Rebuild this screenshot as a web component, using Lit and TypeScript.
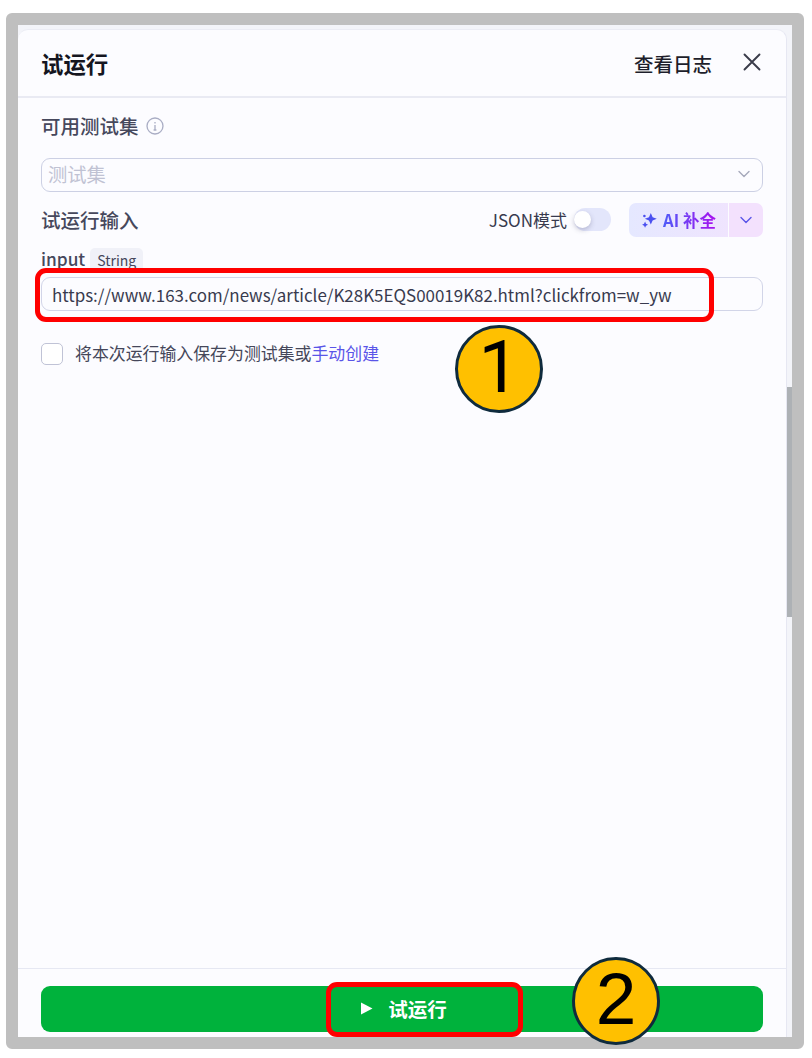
import { LitElement, html, css } from "lit";
import { customElement } from "lit/decorators.js";

@customElement("app-root")
export class AppRoot extends LitElement {
  static styles = css`
    :host {
      display: block;
      width: 812px;
      height: 1058px;
      position: relative;
      background: #fff;
      overflow: hidden;
      font-family: "Noto Sans CJK SC", "Noto Sans", sans-serif;
      color: #383a4e;
    }
    .frame {
      box-sizing: border-box;
      margin: 13px 8px 0 6px;
      height: 1036px;
      border: 12px solid #bfbfbf;
      border-radius: 6px;
      background: #f3f4f9;
      display: flex;
    }
    .panel {
      flex: 1;
      margin-top: 4px;
      background: #fcfcff;
      border-top-left-radius: 10px;
      border-top-right-radius: 10px;
      border-top: 1px solid #ebecf4;
      border-right: 1px solid #e6e7f2;
      display: flex;
      flex-direction: column;
      min-width: 0;
    }
    .track {
      width: 5px;
      padding-top: 362px;
      box-sizing: border-box;
    }
    .thumb {
      height: 230px;
      background: #adb1b5;
    }
    .header {
      height: 68px;
      flex: none;
      box-sizing: border-box;
      border-bottom: 2px solid #e9eaf3;
      display: flex;
      align-items: center;
      padding: 0 25px 0 23px;
    }
    .title {
      font-size: 22.4px;
      font-weight: 700;
      color: #15161f;
      flex: 1;
    }
    .log {
      font-size: 19.5px;
      font-weight: 500;
      color: #1d1e2b;
      margin-right: 31px;
    }
    .close {
      display: block;
      width: 18px;
      height: 18px;
      margin-top: -3px;
    }
    .body {
      flex: 1;
      padding: 0 23px;
      display: flex;
      flex-direction: column;
    }
    .label {
      font-size: 19.5px;
      line-height: 24px;
      font-weight: 500;
      color: #46485c;
    }
    .label-row {
      display: flex;
      align-items: center;
      gap: 7px;
      margin-top: 16px;
      height: 24px;
    }
    .info {
      width: 18px;
      height: 18px;
      display: block;
    }
    .select {
      margin-top: 20px;
      height: 34px;
      box-sizing: border-box;
      border: 1.5px solid #ccd0e4;
      border-radius: 9px;
      display: flex;
      align-items: center;
      padding: 0 11px 2px 6px;
      justify-content: space-between;
      font-size: 19.3px;
      color: #c0c2d3;
    }
    .chev {
      width: 14px;
      height: 14px;
      display: block;
    }
    .input-row {
      margin-top: 10px;
      height: 35px;
      display: flex;
      align-items: center;
    }
    .grow {
      flex: 1;
    }
    .json {
      font-size: 17px;
      font-weight: 400;
      color: #383a4e;
      margin-right: 7px;
    }
    .toggle {
      width: 37px;
      height: 23px;
      border-radius: 12px;
      background: #e3e6fb;
      display: flex;
      align-items: center;
      margin-right: 18px;
    }
    .knob {
      width: 17px;
      height: 17px;
      border-radius: 50%;
      background: #fff;
      box-shadow: 0 2px 5px rgba(70, 70, 110, 0.3);
    }
    .ai {
      display: flex;
      height: 34px;
      border-radius: 7px;
      overflow: hidden;
    }
    .ai-main {
      width: 99px;
      background: linear-gradient(90deg, #e5e8ff, #efe4fe);
      display: flex;
      align-items: center;
      justify-content: center;
      gap: 6px;
      font-size: 16.5px;
      font-weight: 700;
      border-right: 1px solid #fcfcff;
    }
    .ai-text {
      background: linear-gradient(90deg, #4f5cf8, #a811ee);
      -webkit-background-clip: text;
      background-clip: text;
      color: transparent;
    }
    .ai-more {
      width: 34px;
      background: #f3e1fd;
      display: flex;
      align-items: center;
      justify-content: center;
    }
    .var-row {
      margin-top: 11px;
      height: 24px;
      display: flex;
      align-items: center;
      gap: 5px;
    }
    .var {
      font-size: 17.3px;
      line-height: 22px;
      height: 24px;
      font-weight: 500;
      color: #46485c;
    }
    .tag {
      font-size: 14px;
      line-height: 24px;
      height: 24px;
      padding: 0 7px;
      border-radius: 5px;
      background: #f0f1f8;
      color: #45475a;
    }
    .input {
      margin-top: 5px;
      height: 34px;
      box-sizing: border-box;
      border: 1.5px solid #d2d5e8;
      border-radius: 9px;
      display: flex;
      align-items: center;
      padding-left: 10px;
      font-size: 16.95px;
      color: #383a4e;
      white-space: nowrap;
    }
    .check-row {
      margin-top: 32px;
      display: flex;
      align-items: center;
      gap: 12px;
      height: 22px;
    }
    .box {
      width: 22px;
      height: 22px;
      box-sizing: border-box;
      border: 1.5px solid #c0c3d6;
      border-radius: 5px;
      background: #fff;
    }
    .check-text {
      font-size: 16.9px;
      line-height: 22px;
      height: 22px;
      margin-top: -2px;
      color: #45475a;
    }
    .link {
      color: #5a55e8;
    }
    .footer {
      height: 69px;
      flex: none;
      box-sizing: border-box;
      border-top: 1px solid #e6e8f3;
      padding: 17px 23px 0;
    }
    .run {
      height: 46px;
      box-sizing: border-box;
      padding: 0 0 2px 3px;
      background: #00b23c;
      border-radius: 9px;
      display: flex;
      align-items: center;
      justify-content: center;
      gap: 15px;
      color: #fff;
      font-size: 19.5px;
      font-weight: 700;
    }
    .play {
      width: 13px;
      height: 13px;
      display: block;
    }
    .mark {
      position: absolute;
      box-sizing: border-box;
      border: 5px solid #ff0000;
      border-radius: 11px;
    }
    .mark.one {
      left: 35px;
      top: 268px;
      width: 679px;
      height: 54px;
    }
    .mark.two {
      left: 326px;
      top: 982px;
      width: 197px;
      height: 55px;
    }
    .badge {
      position: absolute;
      box-sizing: border-box;
      width: 88px;
      height: 88px;
      border-radius: 50%;
      background: #ffc000;
      border: 3px solid #0f2b3d;
      color: #000;
      font-family: "Liberation Sans", Arial, sans-serif;
      font-size: 73px;
      line-height: 78px;
      text-align: center;
    }
    .badge.one {
      left: 455px;
      top: 325px;
      font-family: Roboto, "Liberation Sans", sans-serif;
    }
    .badge.two {
      left: 572px;
      top: 957px;
    }
  `;

  render() {
    const chev = (color: string) => html`<svg class="chev" viewBox="0 0 14 14" fill="none" stroke=${color} stroke-width="1.4" stroke-linecap="round" stroke-linejoin="round"><path d="M2 4.5 7 9.5 12 4.5"/></svg>`;
    return html`
      <div class="frame">
        <div class="panel">
          <div class="header">
            <div class="title">试运行</div>
            <div class="log">查看日志</div>
            <svg class="close" viewBox="0 0 18 18" fill="none" stroke="#3a3c4a" stroke-width="1.9" stroke-linecap="round"><path d="M1.5 1.5 16.5 16.5M16.5 1.5 1.5 16.5"/></svg>
          </div>
          <div class="body">
            <div class="label-row">
              <span class="label">可用测试集</span>
              <svg class="info" viewBox="0 0 18 18" fill="none" stroke="#a9adc4" stroke-width="1.3"><circle cx="9" cy="9" r="8"/><path d="M9 8v5M7.6 13h2.8M9 5v1.4"/></svg>
            </div>
            <div class="select">
              <span>测试集</span>
              ${chev("#a6a9bb")}
            </div>
            <div class="input-row">
              <span class="label">试运行输入</span>
              <span class="grow"></span>
              <span class="json">JSON模式</span>
              <span class="toggle"><span class="knob"></span></span>
              <div class="ai">
                <div class="ai-main">
                  <svg width="16" height="16" viewBox="0 0 15 15" fill="#4b50f0"><path d="M9.2 1 10.9 4.9 14.8 6.4 10.9 8 9.2 11.8 7.5 8 3.6 6.4 7.5 4.9Z"/><path d="M3.8 9 4.7 11 6.6 11.9 4.7 12.8 3.8 14.8 2.9 12.8 1 11.9 2.9 11Z"/><circle cx="3.2" cy="3.8" r="1.2"/></svg>
                  <span class="ai-text">AI 补全</span>
                </div>
                <div class="ai-more">${chev("#5a55e8")}</div>
              </div>
            </div>
            <div class="var-row">
              <span class="var">input</span>
              <span class="tag">String</span>
            </div>
            <div class="input">https://www.163.com/news/article/K28K5EQS00019K82.html?clickfrom=w_yw</div>
            <div class="check-row">
              <span class="box"></span>
              <span class="check-text">将本次运行输入保存为测试集或<span class="link">手动创建</span></span>
            </div>
          </div>
          <div class="footer">
            <div class="run">
              <svg class="play" viewBox="0 0 13 13" fill="#fff"><path d="M1 .5 12.5 6.5 1 12.5Z"/></svg>
              <span>试运行</span>
            </div>
          </div>
        </div>
        <div class="track"><div class="thumb"></div></div>
      </div>
      <div class="mark one"></div>
      <div class="mark two"></div>
      <div class="badge one">1</div>
      <div class="badge two">2</div>
    `;
  }
}
